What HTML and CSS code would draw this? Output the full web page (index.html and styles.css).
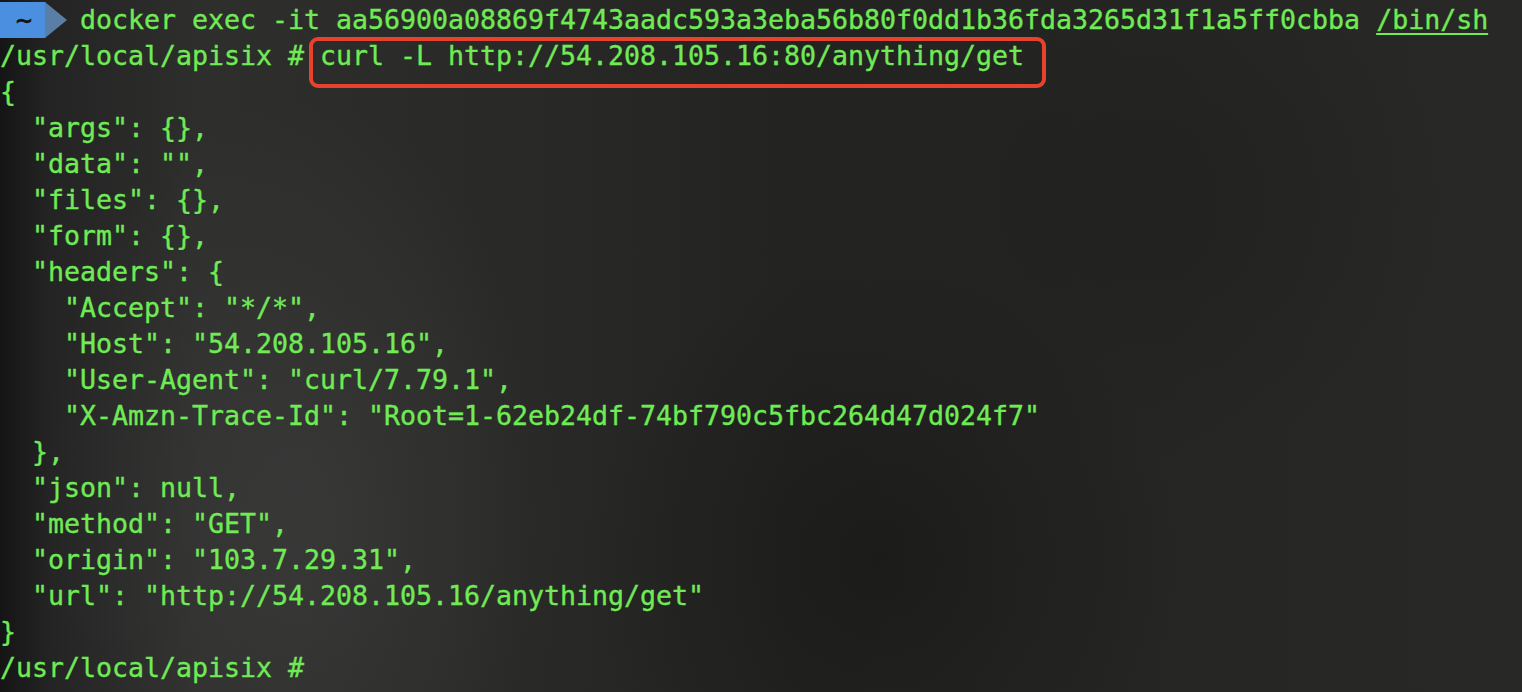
FILE: index.html
```html
<!DOCTYPE html>
<html>
<head>
<meta charset="utf-8">
<link rel="stylesheet" href="styles.css">
</head>
<body>
<div class="term">
  <div class="line"><span class="seg-home"> ~ </span><span class="seg-arrow"></span> docker exec -it aa56900a08869f4743aadc593a3eba56b80f0dd1b36fda3265d31f1a5ff0cbba <span class="link">/bin/sh</span></div>
  <div class="line">/usr/local/apisix # <span class="cmd">curl -L http://54.208.105.16:80/anything/get<span class="highlight"></span></span></div>
  <div class="line">{</div>
  <div class="line">  "args": {},</div>
  <div class="line">  "data": "",</div>
  <div class="line">  "files": {},</div>
  <div class="line">  "form": {},</div>
  <div class="line">  "headers": {</div>
  <div class="line">    "Accept": "*/*",</div>
  <div class="line">    "Host": "54.208.105.16",</div>
  <div class="line">    "User-Agent": "curl/7.79.1",</div>
  <div class="line">    "X-Amzn-Trace-Id": "Root=1-62eb24df-74bf790c5fbc264d47d024f7"</div>
  <div class="line">  },</div>
  <div class="line">  "json": null,</div>
  <div class="line">  "method": "GET",</div>
  <div class="line">  "origin": "103.7.29.31",</div>
  <div class="line">  "url": "http://54.208.105.16/anything/get"</div>
  <div class="line">}</div>
  <div class="line">/usr/local/apisix # </div>
</div>
</body>
</html>
```
FILE: styles.css
```css
html, body {
  margin: 0;
  padding: 0;
  width: 1522px;
  height: 692px;
  overflow: hidden;
}
body {
  background-color: #252523;
  background-image:
    radial-gradient(ellipse 260px 420px at 300px 520px, rgba(70,70,70,0.45), rgba(70,70,70,0) 100%),
    radial-gradient(ellipse 300px 300px at 880px 560px, rgba(20,20,18,0.5), rgba(20,20,18,0) 100%),
    radial-gradient(ellipse 300px 260px at 1150px 200px, rgba(30,30,28,0.5), rgba(30,30,28,0) 100%),
    linear-gradient(90deg, #151515 0px, #242424 50px, #2e2e2d 200px, #2a2a28 450px, #232322 800px, #252523 1100px, #282826 1522px);
}
.term {
  padding-top: 2px;
  font-family: "DejaVu Sans Mono", monospace;
  font-size: 26.58px;
  line-height: 36px;
  color: #70ea55;
  -webkit-text-stroke: 0.35px #70ea55;
}
.line {
  white-space: pre;
  height: 36px;
}
.seg-home {
  display: inline-block;
  width: 45px;
  height: 36px;
  vertical-align: top;
  background: #4a8fe0;
  color: #111;
  -webkit-text-stroke: 0.6px #111;
  white-space: pre;
}
.seg-arrow {
  display: inline-block;
  width: 19px;
  height: 36px;
  vertical-align: top;
  position: relative;
}
.seg-arrow::before {
  content: "";
  position: absolute;
  left: 0;
  top: 0;
  border-top: 18px solid transparent;
  border-bottom: 18px solid transparent;
  border-left: 22px solid #5a7ea6;
}
.link {
  text-decoration: underline;
  text-underline-offset: 4px;
  text-decoration-thickness: 2px;
}
.cmd {
  position: relative;
}
.highlight {
  position: absolute;
  left: -11px;
  right: -22px;
  top: -3px;
  height: 51px;
  box-sizing: border-box;
  border: 4px solid #e6432d;
  border-radius: 9px;
  -webkit-text-stroke: 0;
}
```
